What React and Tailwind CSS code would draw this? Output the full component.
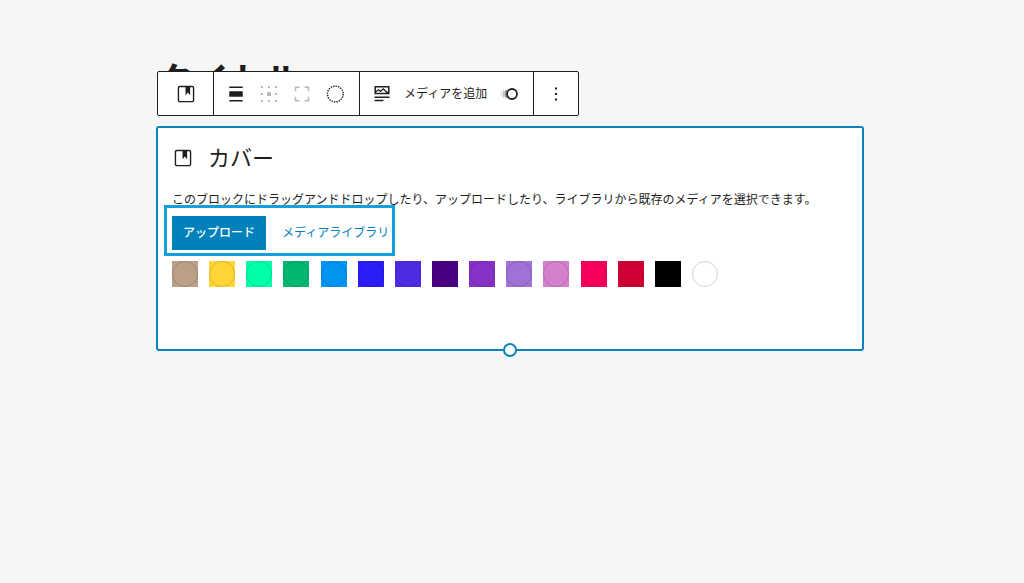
const swatches = [
  { name: 'ベージュ', color: 'bg-[#bba087]' },
  { name: 'イエロー', color: 'bg-[#ffd635]' },
  { name: 'ミント', color: 'bg-[#00ffaa]' },
  { name: 'グリーン', color: 'bg-[#00b872]' },
  { name: 'スカイブルー', color: 'bg-[#0095f0]' },
  { name: 'ブルー', color: 'bg-[#2b1cf8]' },
  { name: 'インディゴ', color: 'bg-[#4f2be3]' },
  { name: 'ダークパープル', color: 'bg-[#4a0082]' },
  { name: 'パープル', color: 'bg-[#8732c6]' },
  { name: 'ラベンダー', color: 'bg-[#a072d8]' },
  { name: 'オーキッド', color: 'bg-[#d480cc]' },
  { name: 'ピンク', color: 'bg-[#f5005c]' },
  { name: 'レッド', color: 'bg-[#d00035]' },
  { name: 'ブラック', color: 'bg-black' },
];

function CoverIcon() {
  return (
    <svg viewBox="0 0 24 24" className="size-[22px]" fill="currentColor" aria-hidden="true">
      <path d="M18.7 3H5.3C4 3 3 4 3 5.3v13.4C3 20 4 21 5.3 21h13.4c1.3 0 2.3-1 2.3-2.3V5.3C21 4 20 3 18.7 3zm.8 15.7c0 .4-.4.8-.8.8H5.3c-.4 0-.8-.4-.8-.8V5.3c0-.4.4-.8.8-.8h6.2v8.9l2.5-3.1 2.5 3.1V4.5h2.2c.4 0 .8.4.8.8v13.4z" />
    </svg>
  );
}

function AlignIcon() {
  return (
    <svg viewBox="0 0 22 22" className="size-[22px]" fill="currentColor" aria-hidden="true">
      <path d="M4.300 3.500h13.400v1.500H4.300zM4.300 8.200h13.400v5.600H4.300zM4.300 17h13.400v1.500H4.300z" />
    </svg>
  );
}

function MatrixIcon() {
  const steps = [4, 11, 18];
  return (
    <svg viewBox="0 0 22 22" className="size-[22px]" fill="currentColor" aria-hidden="true">
      {steps.map((y) =>
        steps.map((x) => {
          const s = x === 11 && y === 11 ? 4 : 2;
          return <rect key={`${x}-${y}`} x={x - s / 2} y={y - s / 2} width={s} height={s} />;
        })
      )}
    </svg>
  );
}

function FullHeightIcon() {
  return (
    <svg viewBox="0 0 22 22" className="size-[22px]" fill="none" stroke="currentColor" strokeWidth="1.5" aria-hidden="true">
      <path d="M4.500 8.300v-4h4M13.500 4.300h4v4M17.500 13.700v4h-4M8.500 17.700h-4v-4" />
    </svg>
  );
}

function DuotoneIcon() {
  return (
    <svg viewBox="0 0 22 22" className="size-[22px]" fill="none" stroke="currentColor" aria-hidden="true">
      <circle cx="11.300" cy="11" r="7.900" strokeWidth="1.500" strokeDasharray="1.350 1.132" />
    </svg>
  );
}

function MediaTextIcon() {
  return (
    <svg viewBox="0 0 22 22" className="size-[22px]" fill="none" stroke="currentColor" strokeWidth="1.5" aria-hidden="true">
      <path d="M4.200 3.800h13.600v6.700H4.200z" />
      <path d="M4.300 9.200l3.200-2.400 2 1.500 2.800-2.500 2.700 2.800 2.500 1.200" strokeWidth="1.300" />
      <path d="M3.500 14.200h15M3.500 17.600h9" />
    </svg>
  );
}

function MotionIcon() {
  return (
    <svg viewBox="0 0 20 22" className="h-[22px] w-5" fill="none" stroke="currentColor" aria-hidden="true">
      <path d="M2.500 8.300v5.400" strokeWidth="1.200" opacity=".15" />
      <path d="M5 7.200c-1 2.300-1 5.300 0 7.600" strokeWidth="1.300" opacity=".3" />
      <path d="M7.700 7c-1.700 2.300-1.700 5.700 0 8" strokeWidth="1.500" opacity=".5" />
      <circle cx="13" cy="11" r="5" strokeWidth="1.800" />
    </svg>
  );
}

function MoreIcon() {
  return (
    <svg viewBox="0 0 22 22" className="size-[22px]" fill="currentColor" aria-hidden="true">
      <path d="M10 4.500h2v2h-2zM10 10h2v2h-2zM10 15.500h2v2h-2z" />
    </svg>
  );
}

function ToolButton({ label, disabled, children }) {
  return (
    <button type="button" aria-label={label} disabled={disabled} className="flex items-center justify-center disabled:text-[#b8b8b8]">
      {children}
    </button>
  );
}

function Toolbar() {
  return (
    <div role="toolbar" aria-label="ブロックツール" className="absolute top-[11px] left-px flex h-[45px] divide-x divide-[#1e1e1e] rounded-xs border border-[#1e1e1e] bg-white">
      <div className="flex w-14 items-center justify-center">
        <ToolButton label="カバー"><CoverIcon /></ToolButton>
      </div>
      <div className="flex w-[146px] items-center gap-[11px] pl-[11px]">
        <ToolButton label="配置"><AlignIcon /></ToolButton>
        <ToolButton label="コンテンツの位置" disabled><MatrixIcon /></ToolButton>
        <ToolButton label="全高" disabled><FullHeightIcon /></ToolButton>
        <ToolButton label="デュオトーン"><DuotoneIcon /></ToolButton>
      </div>
      <div className="flex w-[174px] items-center pl-[11px]">
        <ToolButton label="メディアとテキスト"><MediaTextIcon /></ToolButton>
        <button type="button" className="ml-[11px] pb-0.5 text-xs">メディアを追加</button>
        <div className="ml-3 flex">
          <ToolButton label="モーション"><MotionIcon /></ToolButton>
        </div>
      </div>
      <div className="flex w-11 items-center justify-center">
        <ToolButton label="オプション"><MoreIcon /></ToolButton>
      </div>
    </div>
  );
}

export default function App() {
  return (
    <main className="min-h-screen bg-[#f6f6f6] pt-[60px] pr-1 font-['Noto_Sans_CJK_JP','Liberation_Sans',sans-serif] text-[#1e1e1e]">
      <div className="relative mx-auto max-w-[708px]">
        <h1 className="h-[66px] pl-px text-4xl leading-9 font-bold">タイトル</h1>
        <Toolbar />
        <section className="relative rounded-[3px] border-2 border-[#0b83bd] bg-white px-3.5 pt-3.5 pb-[62px]">
          <h2 className="flex h-8 items-center gap-3.5 text-[22px] leading-8">
            <CoverIcon />
            <span className="pb-1">カバー</span>
          </h2>
          <p className="mt-4 text-xs leading-[18px]">
            このブロックにドラッグアンドドロップしたり、アップロードしたり、ライブラリから既存のメディアを選択できます。
          </p>
          <div className="relative mt-2 flex w-fit items-center gap-4">
            <button type="button" className="h-[34px] bg-[#0081bb] px-[11px] pb-0.5 text-xs font-medium text-white">アップロード</button>
            <button type="button" className="h-[34px] pb-0.5 text-xs text-[#0081bb]">メディアライブラリ</button>
            <span className="pointer-events-none absolute -top-[11px] -right-1.5 -bottom-1.5 -left-2 border-3 border-[#15a0dc]" />
          </div>
          <ul className="mt-[11px] flex max-w-[546px] justify-between">
            {swatches.map((s) => (
              <li key={s.name} className="flex">
                <button type="button" aria-label={s.name} className={`${s.color} size-[26px]`}>
                  <span className="block size-full rounded-full border border-black/15" />
                </button>
              </li>
            ))}
            <li className="flex">
              <button type="button" aria-label="ホワイト" className="size-[26px] rounded-full border border-[#d3d3d3] bg-white" />
            </li>
          </ul>
          <button type="button" aria-label="高さを変更" className="absolute -bottom-2 left-1/2 size-3.5 -translate-x-1/2 rounded-full border-2 border-[#0b83bd] bg-white" />
        </section>
      </div>
    </main>
  );
}
